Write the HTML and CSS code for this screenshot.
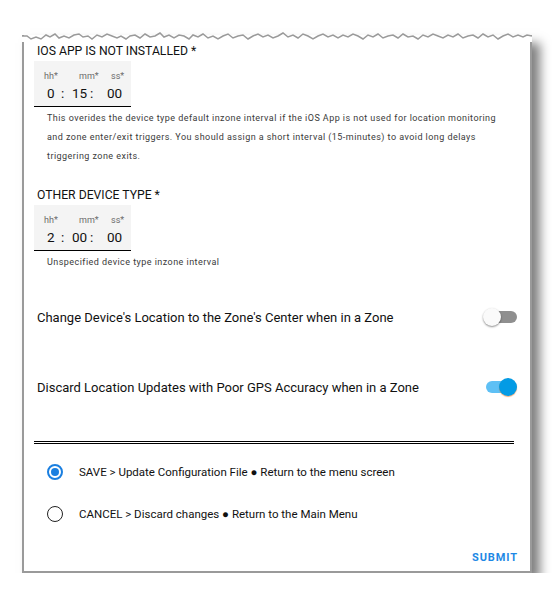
FILE: index.html
```html
<!DOCTYPE html>
<html>
<head>
<meta charset="utf-8">
<link rel="stylesheet" href="styles.css">
</head>
<body>
<div class="wrap">
  <div class="card">
    <svg class="torn" width="510" height="12" viewBox="0 0 510 12">
      <path d="M0,12 L0,6 L5,6 L9,9 L14,7 L19,9 L24,5 L28,7 L33,4 L37,8 L42,6 L47,8 L52,5 L57,4 L61,7 L66,6 L70,9 L75,5 L80,7 L85,4 L90,6 L95,8 L99,6 L104,9 L108,6 L113,5 L118,8 L123,4 L128,7 L133,6 L138,3 L142,7 L147,5 L152,8 L157,5 L162,6 L167,9 L171,5 L176,7 L181,4 L186,8 L191,6 L196,9 L201,6 L206,4 L211,8 L216,6 L221,5 L226,9 L231,6 L236,4 L241,7 L246,5 L251,8 L256,6 L261,3 L266,7 L271,5 L276,8 L281,4 L286,6 L291,9 L296,6 L301,4 L306,7 L311,5 L316,8 L321,5 L326,7 L331,4 L336,6 L341,9 L346,5 L351,7 L356,4 L361,8 L366,6 L371,5 L376,8 L381,4 L386,7 L391,6 L396,9 L401,5 L406,7 L411,4 L416,6 L421,8 L426,5 L431,7 L436,4 L441,8 L446,6 L451,5 L456,8 L461,4 L466,7 L471,5 L476,9 L481,6 L486,4 L491,7 L496,5 L501,7 L505,5 L510,6 L510,12 Z" fill="#ffffff" stroke="none"/>
      <polyline points="0,6 5,6 9,9 14,7 19,9 24,5 28,7 33,4 37,8 42,6 47,8 52,5 57,4 61,7 66,6 70,9 75,5 80,7 85,4 90,6 95,8 99,6 104,9 108,6 113,5 118,8 123,4 128,7 133,6 138,3 142,7 147,5 152,8 157,5 162,6 167,9 171,5 176,7 181,4 186,8 191,6 196,9 201,6 206,4 211,8 216,6 221,5 226,9 231,6 236,4 241,7 246,5 251,8 256,6 261,3 266,7 271,5 276,8 281,4 286,6 291,9 296,6 301,4 306,7 311,5 316,8 321,5 326,7 331,4 336,6 341,9 346,5 351,7 356,4 361,8 366,6 371,5 376,8 381,4 386,7 391,6 396,9 401,5 406,7 411,4 416,6 421,8 426,5 431,7 436,4 441,8 446,6 451,5 456,8 461,4 466,7 471,5 476,9 481,6 486,4 491,7 496,5 501,7 505,5 510,6" fill="none" stroke="#9a9a9a" stroke-width="1.5"/>
    </svg>
    <div class="body">
      <div class="section">
        <div class="label">IOS APP IS NOT INSTALLED *</div>
        <div class="timefield">
          <div class="tlabels"><span class="l1">hh*</span><span class="l2">mm*</span><span class="l3">ss*</span></div>
          <div class="tvalues"><span class="v1">0</span><span class="c1">:</span><span class="v2">15</span><span class="c2">:</span><span class="v3">00</span></div>
        </div>
        <div class="helper">This overides the device type default inzone interval if the iOS App is not used for location monitoring<br>and zone enter/exit triggers. You should assign a short interval (15-minutes) to avoid long delays<br>triggering zone exits.</div>
      </div>
      <div class="section second">
        <div class="label">OTHER DEVICE TYPE *</div>
        <div class="timefield">
          <div class="tlabels"><span class="l1">hh*</span><span class="l2">mm*</span><span class="l3">ss*</span></div>
          <div class="tvalues"><span class="v1">2</span><span class="c1">:</span><span class="v2">00</span><span class="c2">:</span><span class="v3">00</span></div>
        </div>
        <div class="helper">Unspecified device type inzone interval</div>
      </div>
      <div class="switchrow first">
        <span class="stext">Change Device's Location to the Zone's Center when in a Zone</span>
        <span class="switch off"><span class="track"></span><span class="thumb"></span></span>
      </div>
      <div class="switchrow">
        <span class="stext">Discard Location Updates with Poor GPS Accuracy when in a Zone</span>
        <span class="switch on"><span class="track"></span><span class="thumb"></span></span>
      </div>
      <div class="divider"></div>
      <div class="radios">
        <div class="radio checked"><span class="circle"><span class="dot"></span></span><span class="rtext">SAVE &gt; Update Configuration File ● Return to the menu screen</span></div>
        <div class="radio"><span class="circle"></span><span class="rtext">CANCEL &gt; Discard changes ● Return to the Main Menu</span></div>
      </div>
      <div class="actions"><span class="submit">SUBMIT</span></div>
    </div>
  </div>
</div>
</body>
</html>
```

FILE: styles.css
```css
html, body {
  margin: 0;
  padding: 0;
  background: #ffffff;
  font-family: Roboto, "Liberation Sans", sans-serif;
  color: #212121;
}
.wrap {
  padding: 35px 0 0 22px;
}
.card {
  position: relative;
  width: 506px;
  border-left: 2px solid #9a9a9a;
  border-right: 2px solid #9a9a9a;
  border-bottom: 2px solid #9a9a9a;
  background: #fff;
  box-shadow: 8px 8px 10px rgba(0, 0, 0, 0.5);
}
.torn {
  position: absolute;
  left: -2px;
  top: -5px;
  display: block;
}
.body {
  padding: 8px 14px 0 10px;
}
.label {
  margin-left: 3px;
  font-size: 12.2px;
  line-height: 16px;
  height: 16px;
  color: #111;
}
.timefield {
  margin-top: 2px;
  width: 97px;
  height: 46px;
  background: #f4f4f4;
  border-bottom: 1.5px solid #000;
  box-sizing: border-box;
  padding-top: 10px;
}
.tlabels {
  display: flex;
  font-size: 9px;
  line-height: 11px;
  color: #6b6b6b;
  padding-left: 10px;
}
.l1 { width: 35px; }
.l2 { width: 32px; }
.tvalues {
  display: flex;
  margin-top: 3px;
  font-size: 13.5px;
  line-height: 16px;
  color: #111;
  padding-left: 13px;
}
.v1 { width: 14px; }
.c1 { width: 11px; }
.v2 { width: 18px; }
.c2 { width: 17px; }
.helper {
  margin-left: 13px;
  margin-top: 2px;
  font-size: 9px;
  letter-spacing: 0.45px;
  line-height: 19px;
  color: #3a3a3a;
}
.section.second {
  margin-top: 21px;
}
.section.second .timefield {
  margin-top: 2px;
}
.switchrow {
  display: flex;
  align-items: center;
  justify-content: space-between;
  height: 20px;
  margin-left: 3px;
  margin-top: 50px;
}
.switchrow.first {
  margin-top: 35px;
}
.stext {
  font-size: 13px;
  color: #111;
}
.switch {
  position: relative;
  width: 34px;
  height: 20px;
  margin-right: -1px;
}
.track {
  position: absolute;
  right: 0;
  top: 4px;
  width: 30px;
  height: 12px;
  border-radius: 6px;
}
.thumb {
  position: absolute;
  top: 1px;
  width: 18px;
  height: 18px;
  border-radius: 50%;
  box-shadow: 0 1px 2px rgba(0, 0, 0, 0.45);
}
.switch.off .track { background: #8f8f8f; }
.switch.off .thumb { left: 0; background: #fafafa; }
.switch.on .track { background: #5ec0f5; right: 1px; }
.switch.on .thumb { right: 0; background: #039be5; box-shadow: 0 1px 1px rgba(230, 120, 40, 0.6); }
.divider {
  margin-top: 44px;
  height: 1px;
  border-top: 1px solid #000;
  border-bottom: 1px solid #000;
  width: 480px;
}
.radios {
  margin-top: 18px;
}
.radio {
  display: flex;
  align-items: center;
  height: 20px;
  margin-left: 13px;
  margin-bottom: 22px;
}
.circle {
  box-sizing: border-box;
  width: 16px;
  height: 16px;
  border-radius: 50%;
  border: 1.5px solid #222;
  display: flex;
  align-items: center;
  justify-content: center;
}
.radio.checked .circle {
  border: 2px solid #1a7fe0;
}
.dot {
  width: 8px;
  height: 8px;
  border-radius: 50%;
  background: #1a7fe0;
}
.rtext {
  margin-left: 16px;
  font-size: 11.5px;
  color: #111;
}
.actions {
  display: flex;
  justify-content: flex-end;
  padding: 4px 0 5px;
}
.submit {
  font-size: 11px;
  font-weight: 700;
  letter-spacing: 0.9px;
  color: #1e88e5;
  line-height: 16px;
  margin-right: -2px;
}
```
